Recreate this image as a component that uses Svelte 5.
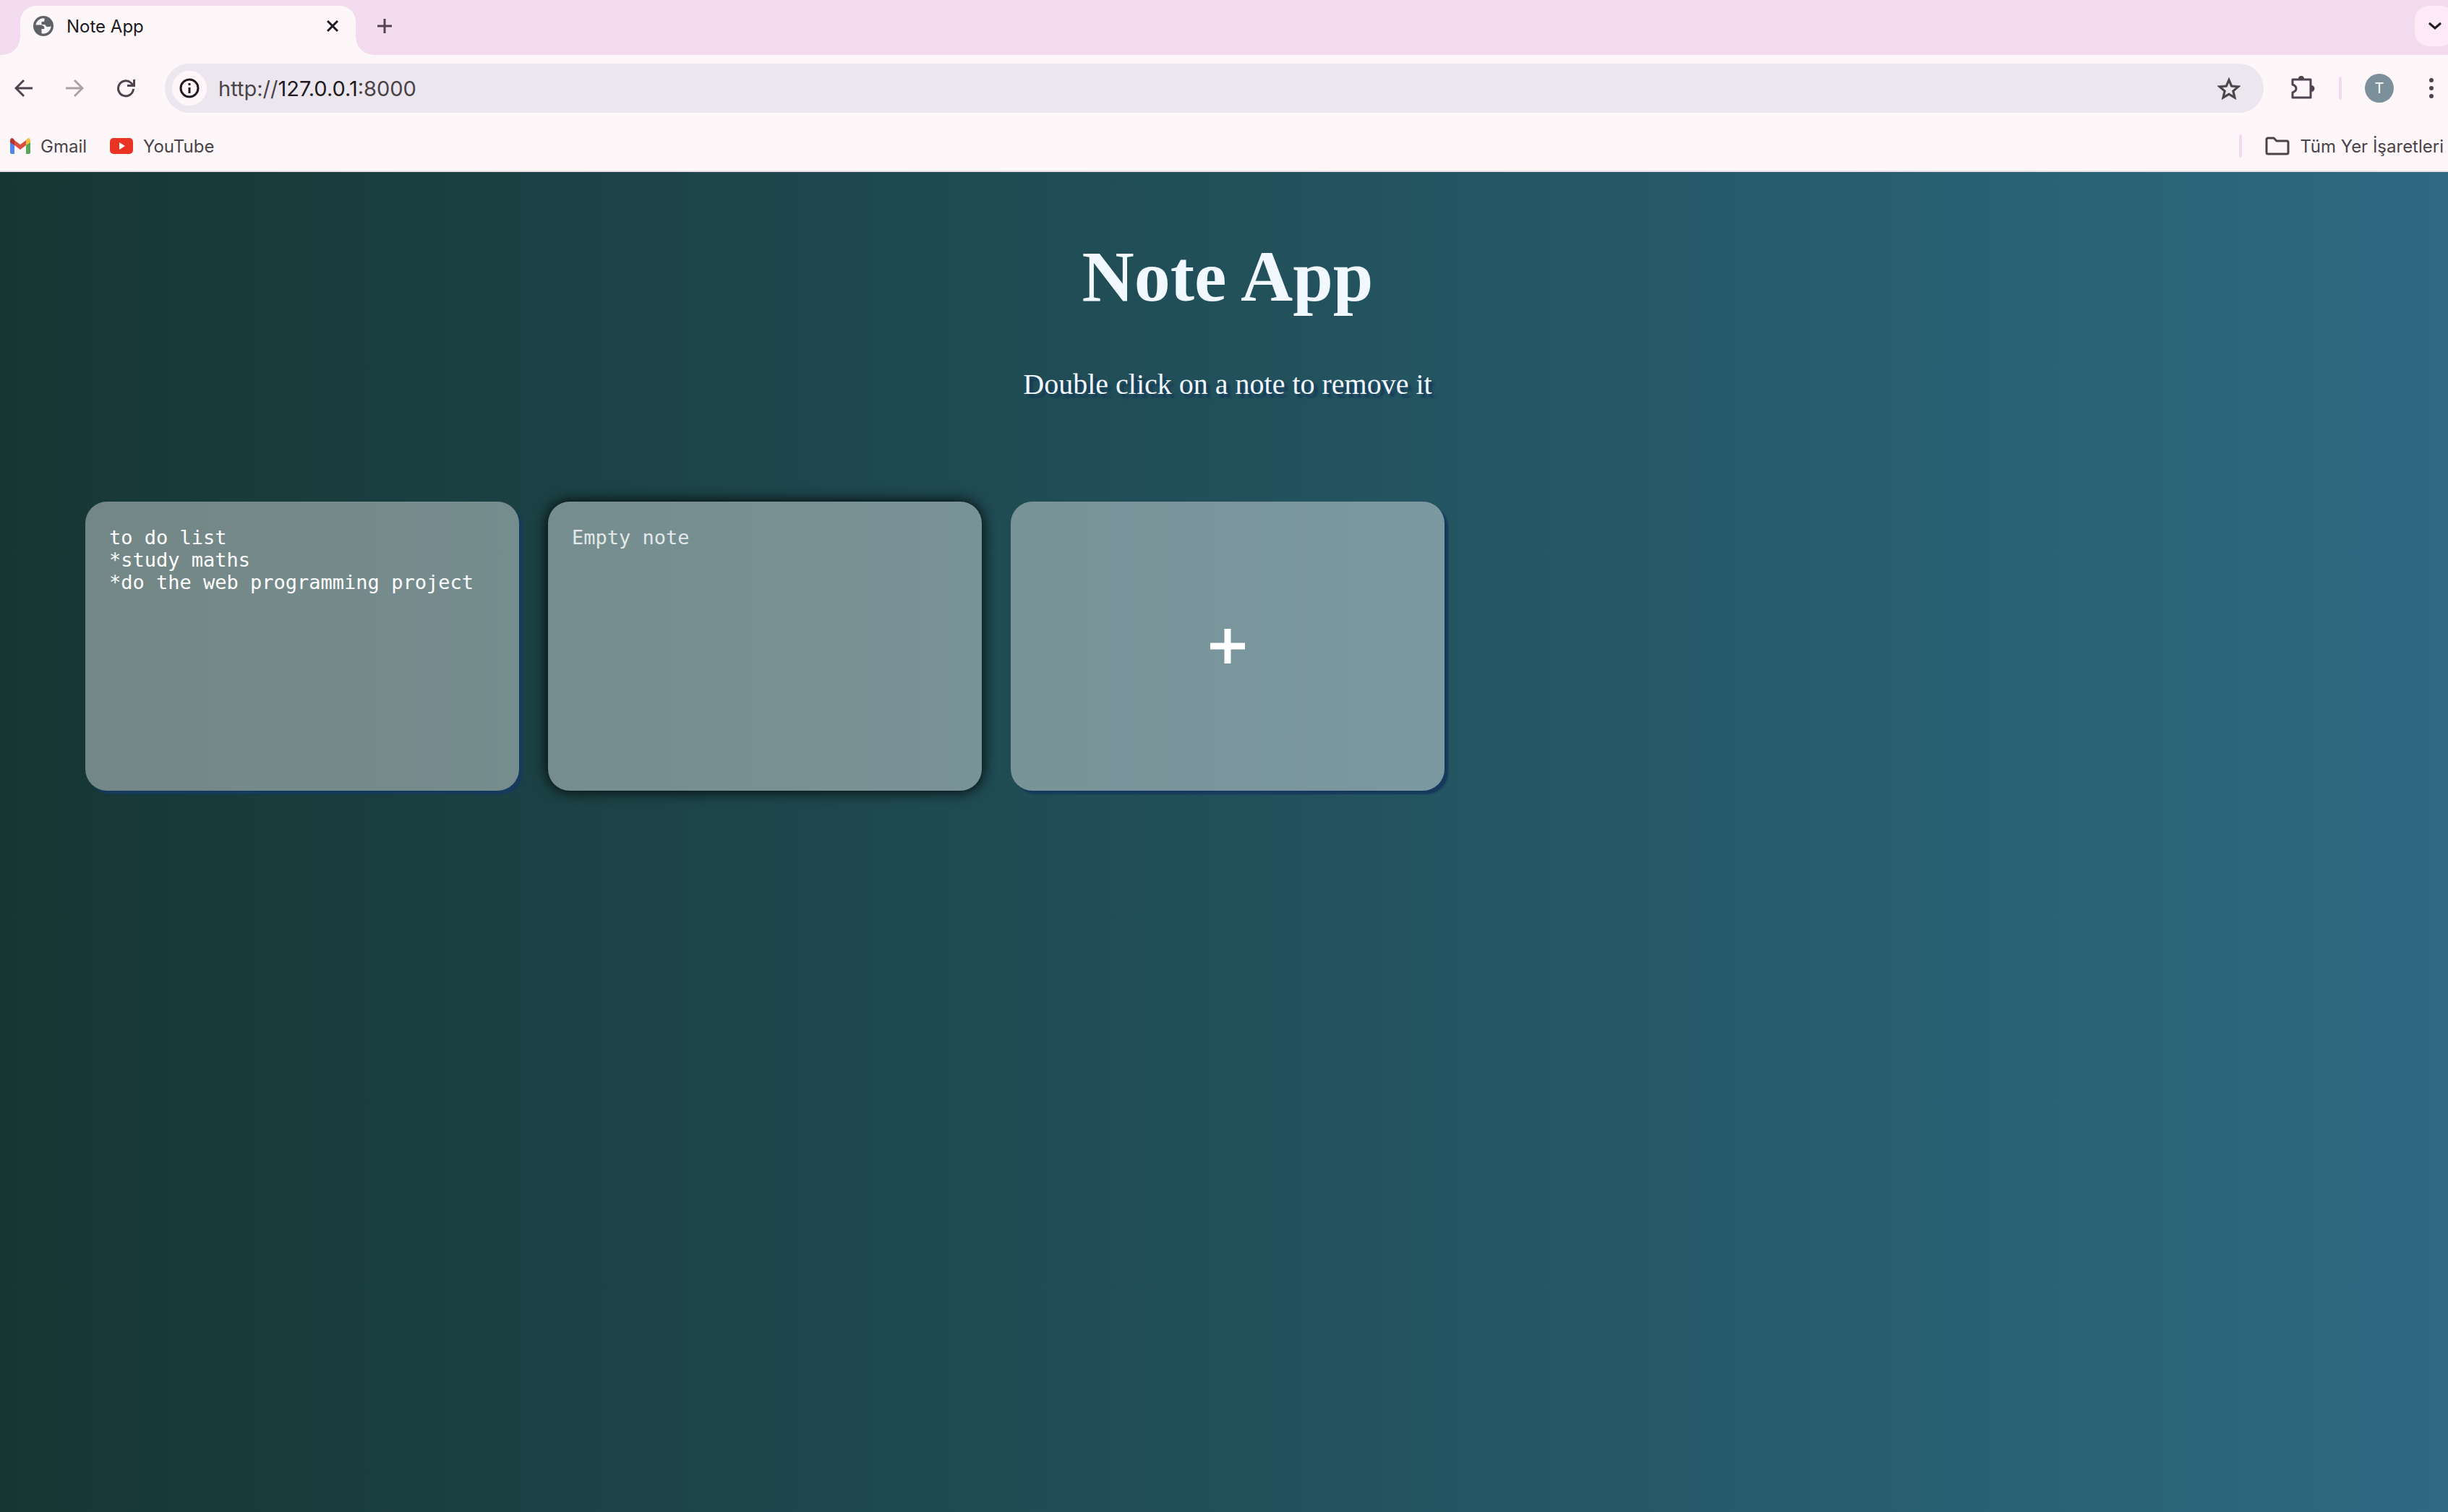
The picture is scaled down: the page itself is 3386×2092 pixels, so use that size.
<script>
  let notes = $state([
    { id: 1, text: 'to do list\n*study maths\n*do the web programming project' },
    { id: 2, text: '' }
  ]);
  const addNote = () => notes.push({ id: Date.now(), text: '' });
  const removeNote = (id) => (notes = notes.filter((n) => n.id !== id));
</script>

<div class="window">
  <header class="chrome">
    <div class="strip">
      <div class="tab">
        <svg class="globe" viewBox="0 0 28 28" width="28" height="28">
          <circle cx="14" cy="14" r="14" fill="#5f6368" />
          <path d="M15.500 3.500 A10.500 10.500 0 0 0 3.500 12.500 H10 Q15.500 12.500 15.500 18 H11.500 V24.300 A10.500 10.500 0 0 0 24.500 13.500 Q24 15 20 15 Q17 15 16.500 12 H11.500 V8 H14 Q15.500 8 15.500 6 Z" fill="#fdf7fa" />
        </svg>
        <span class="title">Note App</span>
        <button class="icon" aria-label="Close tab">
          <svg viewBox="0 0 16 16" width="16" height="16"><path d="M1 1 L15 15 M15 1 L1 15" stroke="#1f1a20" stroke-width="3" /></svg>
        </button>
      </div>
      <button class="icon newtab" aria-label="New tab">
        <svg viewBox="0 0 20 20" width="20" height="20"><path d="M10 0 V20 M0 10 H20" stroke="#51424f" stroke-width="3" /></svg>
      </button>
      <button class="icon search" aria-label="Search tabs">
        <svg viewBox="0 0 18 12" width="18" height="12"><path d="M1 2 L9 9 L17 2" fill="none" stroke="#1f1a20" stroke-width="3" /></svg>
      </button>
    </div>

    <div class="toolbar">
      <button class="icon nav" aria-label="Back">
        <svg viewBox="0 0 26 26" width="26" height="26"><path d="M25 13 H3 M13 2 L2 13 L13 24" fill="none" stroke="#51424f" stroke-width="3" /></svg>
      </button>
      <button class="icon nav" aria-label="Forward" disabled>
        <svg viewBox="0 0 26 26" width="26" height="26"><path d="M1 13 H23 M13 2 L24 13 L13 24" fill="none" stroke="#a9a3a8" stroke-width="3" /></svg>
      </button>
      <button class="icon nav" aria-label="Reload">
        <svg viewBox="0 0 26 26" width="26" height="26"><path d="M23.500 14 A10.500 10.500 0 1 1 20 5.500 L23 8.500 M24.500 1 V9.500 H15" fill="none" stroke="#51424f" stroke-width="3" /></svg>
      </button>
      <div class="omnibox">
        <button class="icon info" aria-label="Site information">
          <svg viewBox="0 0 28 28" width="28" height="28"><circle cx="14" cy="14" r="12" fill="none" stroke="#1f1a20" stroke-width="3" /><path d="M14 13 V21 M14 7 V10" stroke="#1f1a20" stroke-width="3" /></svg>
        </button>
        <span class="url">http://<b>127.0.0.1</b>:8000</span>
        <button class="icon" aria-label="Bookmark this page">
          <svg viewBox="2 2 20 19" width="32" height="31"><path d="M22 9.240l-7.190-.62L12 2 9.190 8.630 2 9.240l5.460 4.730L5.820 21 12 17.270 18.180 21l-1.630-7.030L22 9.240zM12 15.400l-3.760 2.270 1-4.280-3.320-2.880 4.380-.38L12 6.100l1.710 4.040 4.380.38-3.320 2.880 1 4.280L12 15.400z" fill="#4a4348" stroke="#4a4348" stroke-width="0.400" /></svg>
        </button>
      </div>
      <button class="icon ext" aria-label="Extensions">
        <svg viewBox="0 1 34 34" width="34" height="34"><path d="M3 6 H28 V31 H3 V24 Q8 22 8 18.500 Q8 15 3 13 Z" fill="none" stroke="#51424f" stroke-width="3" stroke-linejoin="round" /><path d="M11 5 A4 4 0 0 1 19 5 Z M29 14 A4 4 0 0 1 29 23 Z" fill="#51424f" /></svg>
      </button>
      <span class="rule"></span>
      <button class="avatar" aria-label="Profile">T</button>
      <button class="icon menu" aria-label="Menu">
        <svg viewBox="0 0 6 28" width="6" height="28" fill="#51424f"><circle cx="3" cy="3" r="3" /><circle cx="3" cy="14" r="3" /><circle cx="3" cy="25" r="3" /></svg>
      </button>
    </div>

    <nav class="bookmarks">
      <a href="#gmail">
        <svg viewBox="0 0 28 22" width="28" height="22"><path d="M0 4 L6 8 V22 H2 Q0 22 0 20 Z" fill="#4f86ec" /><path d="M28 4 L22 8 V22 H26 Q28 22 28 20 Z" fill="#58a55c" /><path d="M6 3 L14 9 L22 3 V10 L14 16 L6 10 Z" fill="#d95040" /><path d="M0 4 Q0 0 3 0 Q5 1 6 3 V10 L0 6 Z" fill="#b5352a" /><path d="M28 4 Q28 0 25 0 Q23 1 22 3 V10 L28 6 Z" fill="#f2bd42" /></svg>
        Gmail
      </a>
      <a href="#youtube">
        <svg viewBox="0 0 32 22" width="32" height="22"><rect width="32" height="22" rx="5" fill="#ea3323" /><path d="M13 6 L21 11 L13 16 Z" fill="#fff" /></svg>
        YouTube
      </a>
      <span class="rule push"></span>
      <a href="#all">
        <svg viewBox="0 0 34 26" width="34" height="26"><path d="M4 2 H12 L16 6 H30 Q32 6 32 8 V22 Q32 24 30 24 H4 Q2 24 2 22 V4 Q2 2 4 2 Z" fill="none" stroke="#4a4348" stroke-width="3" /></svg>
        Tüm Yer İşaretleri
      </a>
    </nav>
  </header>

  <main>
    <h1>Note App</h1>
    <p>Double click on a note to remove it</p>
    <div class="grid">
      {#each notes as note, i (note.id)}
        <textarea
          class="note"
          class:active={i === 1}
          placeholder="Empty note"
          aria-label="Note {i + 1}"
          spellcheck="false"
          bind:value={note.text}
          ondblclick={() => removeNote(note.id)}
        ></textarea>
      {/each}
      <button class="note add" aria-label="Add note" onclick={addNote}>
        <svg viewBox="0 0 48 48" width="48" height="48"><path d="M24 0 V48 M0 24 H48" stroke="#fff" stroke-width="9" /></svg>
      </button>
    </div>
  </main>
</div>

<style>
  :global(body) {
    margin: 0;
  }
  .window {
    min-height: 100vh;
    display: flex;
    flex-direction: column;
    overflow-x: hidden;
  }
  button {
    border: 0;
    padding: 0;
    background: none;
    font: inherit;
    color: inherit;
  }
  svg {
    display: block;
    flex: none;
  }
  .chrome {
    background: #fdf7fa;
    border-bottom: 2px solid #ebdfe7;
    font-family: Inter, sans-serif;
    font-size: 24px;
    color: #4a4348;
  }
  .icon {
    display: grid;
    place-items: center;
    flex: none;
  }
  .strip {
    height: 76px;
    background: #f2dbee;
    display: flex;
    align-items: flex-start;
    padding-left: 28px;
    box-sizing: border-box;
  }
  .tab {
    position: relative;
    width: 464px;
    height: 68px;
    margin-top: 8px;
    box-sizing: border-box;
    padding: 0 24px 12px 18px;
    border-radius: 22px 22px 0 0;
    background: #fdf7fa;
    color: #1f1a20;
    display: flex;
    align-items: center;
    gap: 18px;
  }
  .tab::before,
  .tab::after {
    content: '';
    position: absolute;
    bottom: 0;
    width: 24px;
    height: 24px;
  }
  .tab::before {
    right: 100%;
    background: radial-gradient(circle at 0 0, transparent 23px, #fdf7fa 24px);
  }
  .tab::after {
    left: 100%;
    background: radial-gradient(circle at 100% 0, transparent 23px, #fdf7fa 24px);
  }
  .title {
    flex: 1;
  }
  .newtab {
    margin: 26px 0 0 30px;
  }
  .search {
    width: 56px;
    height: 56px;
    margin: 8px -10px 0 auto;
    border-radius: 20px;
    background: #fcebf7;
  }
  .toolbar {
    display: flex;
    align-items: center;
    padding: 12px 20px;
  }
  .nav {
    width: 26px;
    margin-right: 44px;
  }
  .nav:nth-child(3) {
    width: 28px;
    margin-right: 40px;
  }
  .omnibox {
    flex: 1;
    height: 68px;
    box-sizing: border-box;
    border-radius: 34px;
    background: #ece6ee;
    padding: 0 32px 0 10px;
    display: flex;
    align-items: center;
    gap: 16px;
  }
  .info {
    width: 48px;
    height: 48px;
    border-radius: 50%;
    background: #fdf7fa;
  }
  .url {
    flex: 1;
    font-size: 29px;
  }
  .url b {
    font-weight: 400;
    color: #1f1a20;
  }
  .ext {
    margin: 0 33px 0 37px;
  }
  .rule {
    width: 4px;
    height: 32px;
    border-radius: 2px;
    background: #f8d9f2;
  }
  .avatar {
    width: 40px;
    height: 40px;
    margin: 0 49px 0 32px;
    border-radius: 50%;
    background: #7b909b;
    color: #fff;
    font-size: 20px;
  }
  .bookmarks {
    display: flex;
    align-items: center;
    height: 68px;
    padding: 0 6px 0 14px;
    gap: 32px;
  }
  .bookmarks a {
    display: flex;
    align-items: center;
    gap: 14px;
    color: inherit;
    text-decoration: none;
  }
  .push {
    margin-left: auto;
  }
  main {
    flex: 1;
    padding: 0 0 64px 10px;
    background: linear-gradient(to right, #163633, #2d6a82);
    color: #f2f8ff;
    font-family: 'Liberation Serif', serif;
    text-align: center;
  }
  h1 {
    margin: 87px 0 0;
    font-size: 100px;
    line-height: 116px;
  }
  p {
    margin: 67px 0 0;
    font-size: 40px;
    line-height: 48px;
    text-shadow: 5px 5px 3px #163a5c;
  }
  .grid {
    display: grid;
    grid-template-columns: repeat(auto-fill, 600px);
    justify-content: center;
    gap: 40px;
    margin-top: 138px;
    padding: 0 40px;
  }
  .note {
    display: block;
    height: 400px;
    box-sizing: border-box;
    padding: 34px 33px;
    border: 0;
    border-radius: 30px;
    outline: none;
    resize: none;
    background: rgba(255, 255, 255, 0.4);
    box-shadow: 5px 5px 2px #163a5c;
    color: #fff;
    font: 27px/31px 'DejaVu Sans Mono', monospace;
  }
  .note::placeholder {
    color: #e3e9e9;
    opacity: 1;
  }
  .note.active {
    box-shadow: 0 0 20px #000;
  }
  .add {
    display: grid;
    place-items: center;
    padding: 0;
  }
</style>
